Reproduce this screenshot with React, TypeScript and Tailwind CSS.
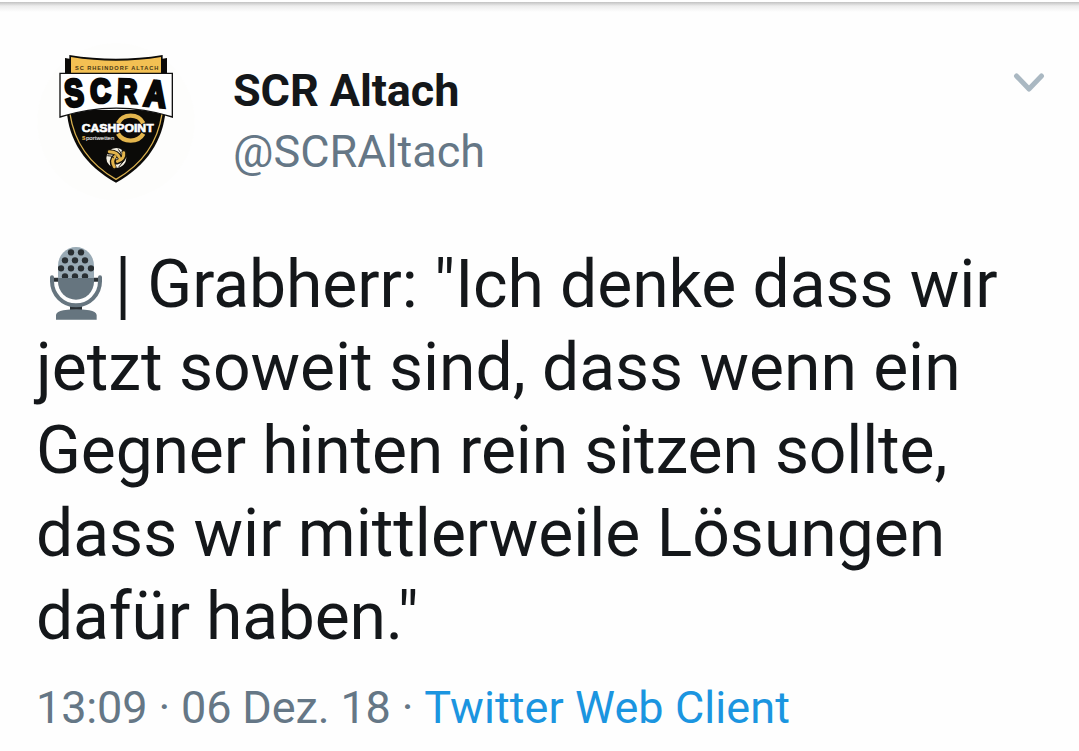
interface QuoteLine {
  text: string;
  className: string;
}

const quoteLines: QuoteLine[] = [
  { text: 'jetzt soweit sind, dass wenn ein', className: 'tracking-[-0.03px]' },
  { text: 'Gegner hinten rein sitzen sollte,', className: 'tracking-[-0.15px]' },
  { text: 'dass wir mittlerweile Lösungen', className: 'tracking-[-0.02px]' },
  { text: 'dafür haben."', className: 'tracking-[-0.2px]' },
];

// [x, y] of the holes in the microphone grille
const grilleDots = [
  [123, 52], [153, 52],
  [105, 76], [135, 76], [165, 76],
  [93, 100], [123, 100], [153, 100], [183, 100],
  [105, 124], [135, 124], [165, 124],
];

function ClubCrest() {
  return (
    <svg viewBox="0 0 510 480" className="h-[160px] w-[170px] shrink-0" aria-label="SCR Altach">
      <circle cx="258" cy="245" r="236" fill="#fdfdfc" />
      {/* Shield */}
      <path d="M110 210 C116 300 165 378 258 428 C350 378 400 300 407 210 Z" fill="#0b0a08" />
      <path
        d="M120 222 C132 300 174 370 258 418 C342 370 384 300 396 222"
        fill="none"
        stroke="#d9b04e"
        strokeWidth="4"
      />
      {/* Top banner */}
      <path d="M105 54 L118 56 L118 45 Q258 68 398 45 L398 56 L411 54 V106 H105 Z" fill="#0b0a08" />
      <path d="M123 51 Q258 74 393 51 V99 H123 Z" fill="#f3c053" />
      <text
        x="135"
        y="89"
        textLength="250"
        fontSize="17"
        fontWeight="700"
        fill="#4a3716"
        fontFamily="'Liberation Sans', sans-serif"
      >
        SC RHEINDORF ALTACH
      </text>
      {/* Name plate */}
      <path d="M90 100 H427 V231 Q258 178 90 231 Z" fill="#fff" stroke="#111" strokeWidth="4" />
      <g
        fontFamily="'Liberation Sans', Arial, sans-serif"
        fontWeight="700"
        fill="#080808"
        stroke="#080808"
        strokeWidth="10"
      >
        <text transform="translate(108 201) rotate(-6) scale(0.74 1)" fontSize="115">S</text>
        <text transform="translate(182 188) rotate(-2) scale(0.84 1)" fontSize="100">C</text>
        <text transform="translate(261 187) rotate(2) scale(0.82 1)" fontSize="100">R</text>
        <text transform="translate(340 196) rotate(6) scale(0.83 1)" fontSize="110">A</text>
      </g>
      {/* Sponsor */}
      <path d="M264 250 A42 40 0 0 1 340 250" fill="none" stroke="#e3b54d" strokeWidth="13" />
      <path d="M264 281 A42 36 0 0 0 340 281" fill="none" stroke="#e3b54d" strokeWidth="13" />
      <text
        x="155"
        y="277"
        textLength="216"
        lengthAdjust="spacingAndGlyphs"
        fontSize="34"
        fontWeight="700"
        fill="#fff"
        stroke="#fff"
        strokeWidth="2"
        fontFamily="'Liberation Sans', sans-serif"
      >
        CASHPOINT
      </text>
      <g fontFamily="'Liberation Sans', sans-serif" fontSize="15" strokeWidth="0.5">
        <text x="156" y="299" fill="#e3b54d" stroke="#e3b54d" fontWeight="700">
          S
        </text>
        <text
          x="168"
          y="299"
          textLength="85"
          lengthAdjust="spacingAndGlyphs"
          fill="#d6d6d6"
          stroke="#d6d6d6"
        >
          portwetten
        </text>
      </g>
      {/* Volleyball */}
      <circle cx="259" cy="354" r="30" fill="#f5f1e4" />
      <g fill="none" strokeLinecap="round">
        <path d="M236 336 Q262 334 270 354 M282 336 Q287 358 260 366 M252 382 Q240 362 257 346" stroke="#17130b" strokeWidth="15" />
        <path d="M238 335 Q262 336 268 352 M281 338 Q284 356 262 364 M253 380 Q242 362 255 350" stroke="#e3b54d" strokeWidth="9" />
        <path d="M233 347 Q246 346 251 353 M266 329 Q276 338 274 350 M267 380 L282 362" stroke="#17130b" strokeWidth="3" />
      </g>
    </svg>
  );
}

function Microphone() {
  return (
    <svg viewBox="0 0 240 285" className="h-[95px] w-[80px] shrink-0">
      <defs>
        <clipPath id="grille">
          <path d="M84 129 V92 A54 56 0 0 1 192 92 V129 Z" />
        </clipPath>
      </defs>
      <path d="M72 134 H205" stroke="#292f33" strokeWidth="12" />
      <path d="M120 210 H156 V228 H120 Z" fill="#292f33" />
      <g clipPath="url(#grille)">
        <path d="M80 30 H196 V130 H80 Z" fill="#99aab5" />
        {grilleDots.map(([x, y]) => (
          <circle key={`${x}-${y}`} cx={x} cy={y} r="9.5" fill="#292f33" />
        ))}
      </g>
      <path d="M84 129 H192 V140 A54 54 0 0 1 84 140 Z" fill="#66757f" />
      <path
        d="M66 127 V139 A72 72 0 0 0 210 139 V127"
        fill="none"
        stroke="#66757f"
        strokeWidth="12"
        strokeLinecap="round"
      />
      <path d="M78 254 V240 Q80 229 100 226 Q138 219 178 226 Q198 229 200 240 V254 Z" fill="#66757f" />
    </svg>
  );
}

export default function App() {
  return (
    <div className="h-[751px] w-[1079px] overflow-hidden bg-[#fefefe] font-['Roboto',sans-serif] text-[#14171a]">
      <div className="h-0.5 bg-white" />
      <div className="h-[10px] bg-linear-to-b from-[#c2c2c2] via-[#ededed] via-40% to-[#fefefe]" />

      {/* Author */}
      <header className="mt-7 flex items-start pl-[30px]">
        <ClubCrest />
        <div className="mt-5 ml-[33px] whitespace-nowrap text-[45px] leading-[61px]">
          <p className="font-bold tracking-[-0.1px]">SCR Altach</p>
          <p className="text-[#657786]">@SCRAltach</p>
        </div>
        <svg viewBox="0 0 32 22" className="mt-[32px] mr-[34px] ml-auto h-[22px] w-[32px]" fill="none">
          <path d="M3.5 4 L16 17 L28.5 4" stroke="#aab8c2" strokeWidth="5" strokeLinecap="round" strokeLinejoin="round" />
        </svg>
      </header>

      {/* Quote */}
      <div className="mt-[43px] pl-9 whitespace-nowrap text-[66px] leading-[83px]">
        <div className="flex h-[83px] items-start">
          <div className="-mt-2 -ml-1.5">
            <Microphone />
          </div>
          <p className="ml-[5px] tracking-[-0.07px]">
            <span className="inline-block origin-center scale-y-115">|</span> Grabherr: "Ich denke dass wir
          </p>
        </div>
        {quoteLines.map((line) => (
          <p key={line.text} className={line.className}>
            {line.text}
          </p>
        ))}
      </div>

      <footer className="mt-5 pl-9 whitespace-nowrap text-[45px] leading-[60px] tracking-[-0.14px] text-[#657786]">
        13:09 · 06 Dez. 18 · <span className="tracking-[0.08px] text-[#1b95e0]">Twitter Web Client</span>
      </footer>
    </div>
  );
}
